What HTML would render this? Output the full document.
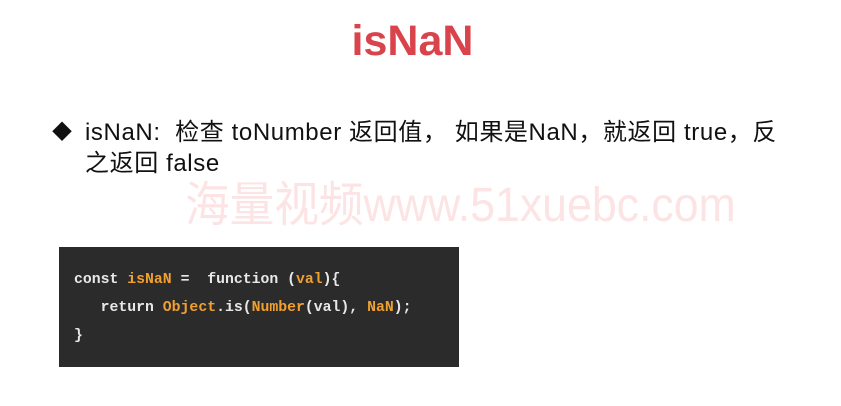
<!DOCTYPE html>
<html><head><meta charset="utf-8"><style>
body{margin:0;width:841px;height:406px;background:#fff;position:relative;overflow:hidden;font-family:"Liberation Sans","Noto Sans CJK SC",sans-serif}
.t{position:absolute;left:-8px;width:841px;top:17px;text-align:center;font-size:43px;font-weight:bold;color:#d9434b}
.b{position:absolute;left:52px;top:117px;font-size:24px;letter-spacing:0.6px;color:#111;line-height:31px;width:780px}
.b .d{position:absolute;left:0;top:1px;font-size:20px}
.b p{margin:0 0 0 33px;white-space:nowrap}
.w{position:absolute;left:185px;top:165px;font-size:48px;color:#fde4e4;white-space:nowrap;transform:scaleX(0.93);transform-origin:0 0}
.c{position:absolute;left:59px;top:247px;width:400px;height:120px;background:#2b2b2b;font-family:"Liberation Mono","DejaVu Sans Mono",monospace;font-size:14.8px;color:#e8e8e8;font-weight:bold}
.c div{position:absolute;left:15px;white-space:pre}
.o{color:#f0a030}
</style></head><body>
<div class="t">isNaN</div>
<div class="w">海量视频www.51xuebc.com</div>
<div class="b"><span class="d">◆</span><p>isNaN:&nbsp; 检查 toNumber 返回值， 如果是NaN，就返回 true，反<br>之返回 false</p></div>
<div class="c">
<div style="top:25px">const <span class="o">isNaN</span> =  function (<span class="o">val</span>){</div>
<div style="top:53px">   return <span class="o">Object</span>.is(<span class="o">Number</span>(val), <span class="o">NaN</span>);</div>
<div style="top:81px">}</div>
</div>
</body></html>
